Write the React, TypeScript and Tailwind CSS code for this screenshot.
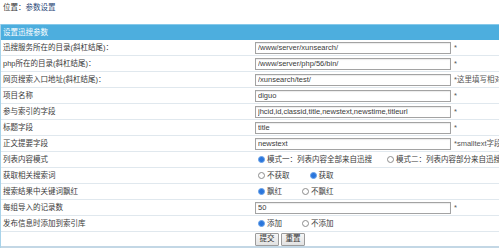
import React from "react";

const font = { fontFamily: '"Liberation Sans", "Noto Sans CJK SC", sans-serif' };

function Radio({ checked }: { checked?: boolean }) {
  return checked ? (
    <span className="inline-block w-[7px] h-[7px] rounded-full bg-[#2a76dc] border border-[#6aa2e8] shrink-0 ml-[3px] mr-[2px]" />
  ) : (
    <span className="inline-block w-[7px] h-[7px] rounded-full bg-white border border-[#8c8c8c] shrink-0 ml-[3px] mr-[2px]" />
  );
}

function Field({ value, note }: { value: string; note: string }) {
  return (
    <>
      <input
        readOnly
        defaultValue={value}
        className="w-[196px] h-[12px] border border-[#a3a3a3] bg-white px-[2px] text-[7.5px] text-[#3a3a3a] outline-none shadow-[inset_0_1px_1px_rgba(0,0,0,0.08)]"
        style={font}
      />
      <span className="ml-[3px] text-[7.5px] text-[#555] whitespace-nowrap">{note}</span>
    </>
  );
}

function Row({ label, children, last }: { label: string; children: React.ReactNode; last?: boolean }) {
  return (
    <div
      className={
        "flex h-[16px] items-center " +
        (last ? "border-b-2 border-[#c3d7e5]" : "border-b border-[#e0e8ee]")
      }
    >
      <div className="w-[254px] shrink-0 pl-[2px] text-[7.5px] text-[#3a3a3a] whitespace-nowrap">{label}</div>
      <div className="flex items-center whitespace-nowrap text-[7.5px] text-[#3a3a3a]">{children}</div>
    </div>
  );
}

export default function App() {
  return (
    <div className="w-[499px] h-[250px] overflow-hidden bg-white" style={font}>
      <div className="h-[16px] flex items-center pl-[3px] text-[7.5px] text-[#333] whitespace-nowrap">
        位置：<span className="text-[#2b4878]">参数设置</span>
      </div>
      <div className="h-[8px]" />
      <div className="w-[620px] border-l border-[#a8d3ea]">
        <div className="h-[16px] flex items-center bg-[#4daede] border-t border-[#86c9ea] pl-[2px] text-[7.5px] text-white whitespace-nowrap">
          设置迅搜参数
        </div>
        <Row label="迅搜服务所在的目录(斜杠结尾)：">
          <Field value="/www/server/xunsearch/" note="*" />
        </Row>
        <Row label="php所在的目录(斜杠结尾)：">
          <Field value="/www/server/php/56/bin/" note="*" />
        </Row>
        <Row label="网页搜索入口地址(斜杠结尾)：">
          <Field value="/xunsearch/test/" note="*这里填写相对于网站根目录的地址" />
        </Row>
        <Row label="项目名称">
          <Field value="diguo" note="*" />
        </Row>
        <Row label="参与索引的字段">
          <Field value="jhcid,id,classid,title,newstext,newstime,titleurl" note="*" />
        </Row>
        <Row label="标题字段">
          <Field value="title" note="*" />
        </Row>
        <Row label="正文提要字段">
          <Field value="newstext" note="*smalltext字段为空时使用" />
        </Row>
        <Row label="列表内容模式">
          <Radio checked />
          <span>模式一：列表内容全部来自迅搜</span>
          <span className="w-[12px]" />
          <Radio />
          <span>模式二：列表内容部分来自迅搜</span>
        </Row>
        <Row label="获取相关搜索词">
          <Radio />
          <span>不获取</span>
          <span className="w-[17px]" />
          <Radio checked />
          <span>获取</span>
        </Row>
        <Row label="搜索结果中关键词飘红">
          <Radio checked />
          <span>飘红</span>
          <span className="w-[17px]" />
          <Radio />
          <span>不飘红</span>
        </Row>
        <Row label="每组导入的记录数">
          <Field value="50" note="*" />
        </Row>
        <Row label="发布信息时添加到索引库">
          <Radio checked />
          <span>添加</span>
          <span className="w-[17px]" />
          <Radio />
          <span>不添加</span>
        </Row>
        <Row label="" last>
          <button className="h-[13px] w-[24px] border border-[#9c9c9c] rounded-[1px] bg-gradient-to-b from-[#f6f6f6] to-[#e2e2e2] text-[7.5px] text-[#333] leading-none flex items-center justify-center" style={font}>
            提交
          </button>
          <button className="ml-[2px] h-[13px] w-[24px] border border-[#9c9c9c] rounded-[1px] bg-gradient-to-b from-[#f6f6f6] to-[#e2e2e2] text-[7.5px] text-[#333] leading-none flex items-center justify-center" style={font}>
            重置
          </button>
        </Row>
      </div>
    </div>
  );
}
